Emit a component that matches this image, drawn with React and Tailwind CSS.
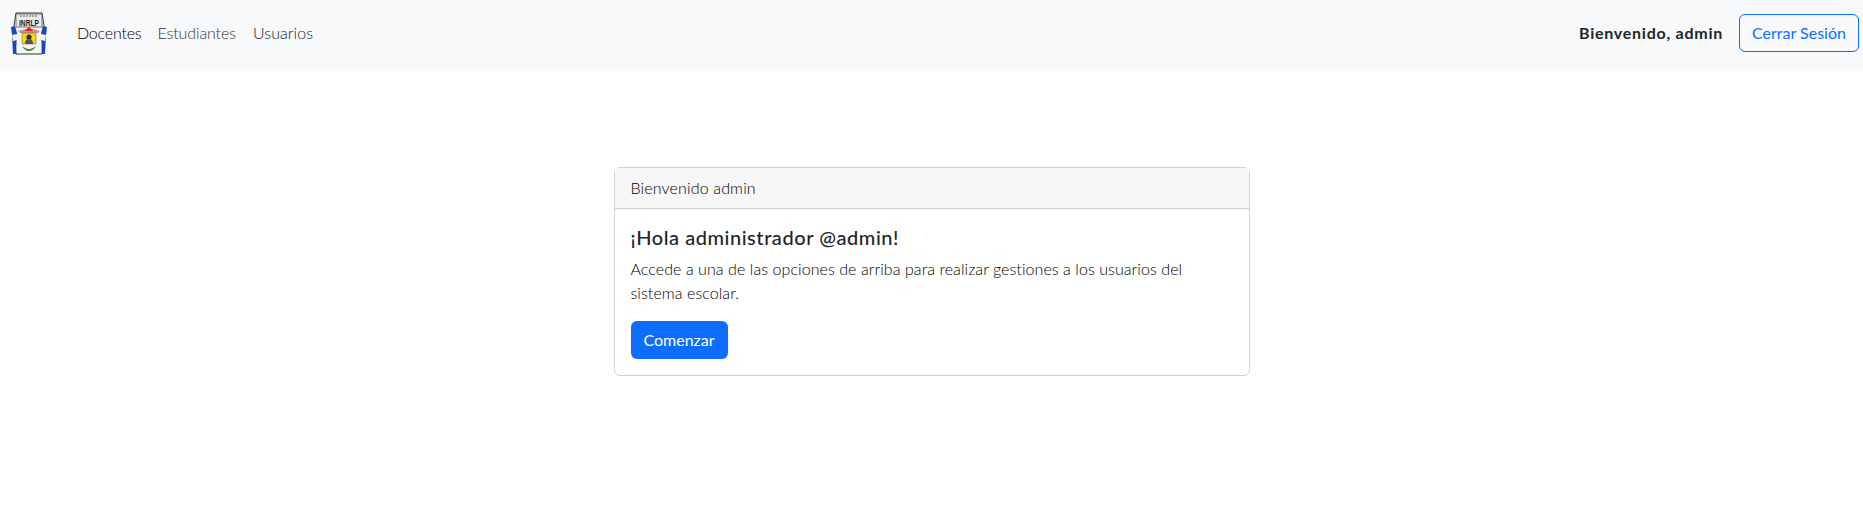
export default function App() {
  const font = "font-['Lato','Noto_Sans',sans-serif]";
  return (
    <div className={`${font} min-h-[520px] bg-white text-[16px] font-light leading-6 text-black`}>
      <nav className="flex h-[71px] items-center justify-between bg-[#f8f9fa] pb-[5px] pl-[10px] pr-[5px]">
        <div className="flex items-center">
          <svg width="38" height="44" viewBox="0 0 38 44" className="mr-[29px] mt-[1px]">
            <path d="M6 1h26l2 12-2 29H6L4 13z" fill="#f6f6f2" stroke="#333" strokeWidth="1" />
            <rect x="6" y="2" width="26" height="13" fill="#ededE8" stroke="#555" strokeWidth="0.8" />
            <path d="M10 4h18" stroke="#555" strokeWidth="1" strokeDasharray="2 1" />
            <text x="19" y="14" textAnchor="middle" fontSize="9" fontWeight="700" fontFamily="Liberation Sans, sans-serif" fill="#222" textLength="20" lengthAdjust="spacingAndGlyphs">INRLP</text>
            <path d="M1 15l4-1 2 7-1 21H3L2 23z" fill="#1648c0" />
            <path d="M37 15l-4-1-2 7 1 21h3l1-19z" fill="#1648c0" />
            <path d="M2 23l5-1v6l-4 1zM36 23l-5-1v6l4 1z" fill="#f5f5f5" />
            <path d="M8 19l11-3 11 3-2 2H10z" fill="#cf8f85" />
            <path d="M15 19h8l-4-4z" fill="#d8201c" />
            <path d="M12 21h14v11H12z" fill="#f3d912" stroke="#555" strokeWidth="0.5" />
            <circle cx="19" cy="25" r="2.6" fill="#2f2f2f" />
            <path d="M15 32c0-4 2-5 4-5s4 1 4 5z" fill="#555" />
            <path d="M12 34c2 4 5 5 7 5s5-1 7-5c-2 1-4 3-7 3s-5-2-7-3z" fill="#4b7f4b" />
          </svg>
          <a className="mr-4 tracking-[-0.2px] text-black">Docentes</a>
          <a className="mr-[17px] tracking-[-0.1px] text-[#34373a]">Estudiantes</a>
          <a className="tracking-[0.1px] text-[#212529]">Usuarios</a>
        </div>
        <div className="flex items-center">
          <strong className="mr-4 font-bold tracking-[0.75px] text-[#212529]">Bienvenido, admin</strong>
          <button className="mr-[-1px] h-[38px] w-[120px] rounded-md border border-[#0d6efd] font-normal text-[#0d6efd]">Cerrar Sesión</button>
        </div>
      </nav>
      <div className="mt-[96px] flex justify-center">
        <div className="w-[636px] rounded-md border border-[#d0d1d2] bg-white">
          <div className="h-[41px] border-b border-[#d0d1d2] bg-[#f7f7f7] px-4 py-2 tracking-[0.15px]">Bienvenido admin</div>
          <div className="p-4">
            <h5 className="mb-2 text-[20px] font-medium leading-6 tracking-[0.55px] text-[#212529]">¡Hola administrador @admin!</h5>
            <p className="mb-4 w-[590px] tracking-[0.07px]">Accede a una de las opciones de arriba para realizar gestiones a los usuarios del sistema escolar.</p>
            <button className="h-[38px] w-[97px] rounded-md bg-[#0d6efd] font-normal text-white">Comenzar</button>
          </div>
        </div>
      </div>
    </div>
  );
}
